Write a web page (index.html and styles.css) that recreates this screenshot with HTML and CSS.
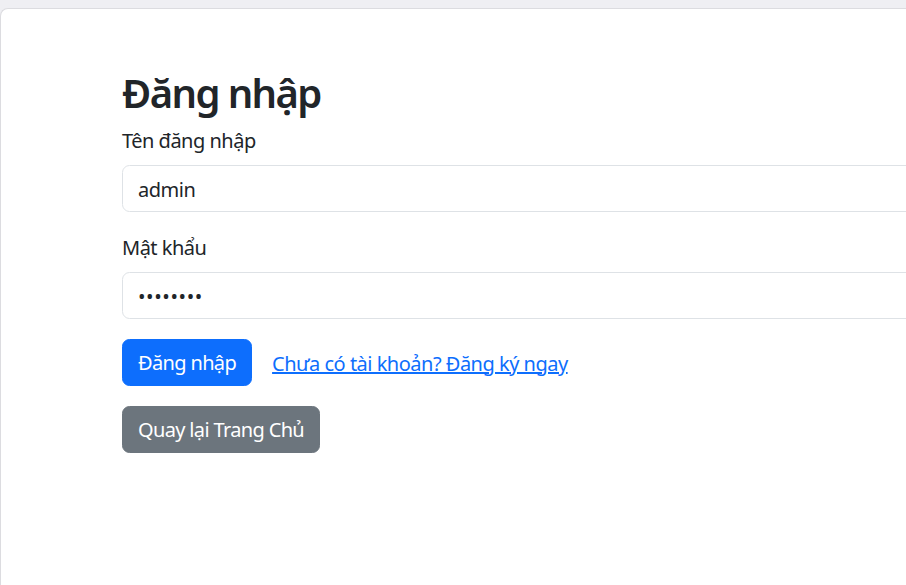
FILE: index.html
```html
<!DOCTYPE html>
<html lang="vi">
<head>
<meta charset="utf-8">
<title>Đăng nhập</title>
<link rel="stylesheet" href="styles.css">
</head>
<body>
<div class="frame">
  <main class="container">
    <h1 class="title">Đăng nhập</h1>
    <form class="login-form">
      <div class="field">
        <label class="form-label" for="username">Tên đăng nhập</label>
        <input class="form-control" id="username" type="text" value="admin">
      </div>
      <div class="field">
        <label class="form-label" for="password">Mật khẩu</label>
        <input class="form-control form-password" id="password" type="password" value="12345678">
      </div>
      <div class="actions">
        <button type="button" class="btn btn-primary">Đăng nhập</button>
        <a class="link" href="#">Chưa có tài khoản? Đăng ký ngay</a>
      </div>
    </form>
    <div class="back">
      <a class="btn btn-secondary" href="#">Quay lại Trang Chủ</a>
    </div>
  </main>
</div>
</body>
</html>
```

FILE: styles.css
```css
* { box-sizing: border-box; }
html, body { margin: 0; padding: 0; }
body {
  background: #efeff3;
  overflow: hidden;
  height: 585px;
  font-family: "Noto Sans", "Open Sans", sans-serif;
  font-size: 20px;
  line-height: 1.5;
  letter-spacing: -0.5px;
  color: #212529;
}
.frame {
  margin-top: 8px;
  height: 577px;
  background: #ffffff;
  border-top: 1px solid #dcdce0;
  border-left: 1px solid #dcdce0;
  border-top-left-radius: 8px;
  overflow: hidden;
}
.container {
  width: 1100px;
  padding: 60px 0 0 121px;
}
.title {
  margin: 0 0 8px;
  font-size: 40px;
  font-weight: 600;
  line-height: 48px;
  letter-spacing: -1.6px;
}
.field { margin-bottom: 20px; }
.form-label {
  display: block;
  margin-bottom: 10px;
  padding-top: 1px;
  height: 30px;
}
.form-control {
  display: block;
  width: 100%;
  height: 47px;
  padding: 8px 15px 7px;
  font: inherit;
  letter-spacing: inherit;
  color: #212529;
  background: #fff;
  border: 1px solid #dee2e6;
  border-radius: 7.5px;
  outline: none;
}
.form-password { letter-spacing: 0.6px; }
.actions {
  display: flex;
  align-items: center;
  gap: 20px;
  margin-bottom: 20px;
}
.btn {
  display: inline-block;
  height: 47px;
  padding: 8px 15px 7px;
  font: inherit;
  letter-spacing: -0.65px;
  line-height: 1.5;
  border: 1px solid transparent;
  border-radius: 7.5px;
  color: #fff;
  text-decoration: none;
  cursor: pointer;
}
.btn-primary { background: #0d6efd; border-color: #0d6efd; }
.btn-secondary { background: #6c757d; border-color: #6c757d; }
.link {
  padding-top: 2px;
  color: #0d6efd;
  text-decoration: underline;
}
```
